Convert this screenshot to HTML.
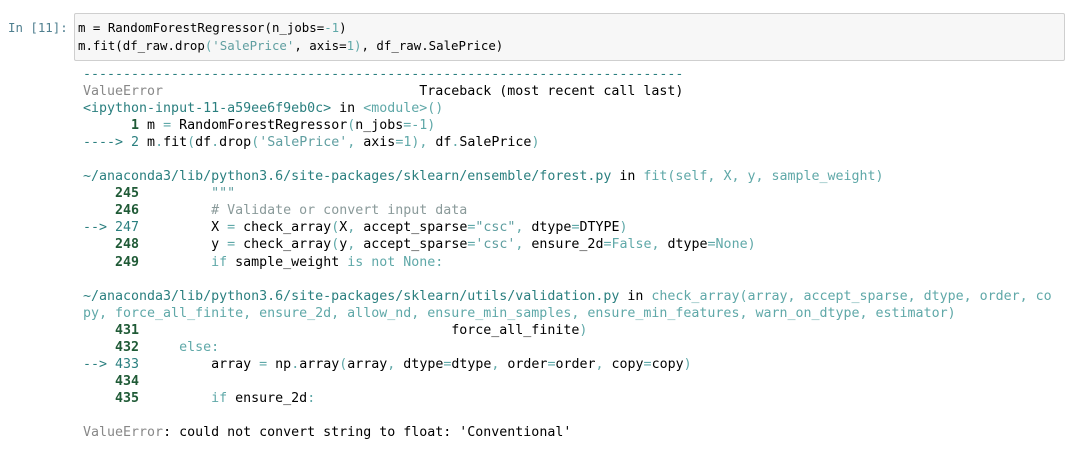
<!DOCTYPE html>
<html><head><meta charset="utf-8">
<style>
html,body{margin:0;padding:0;background:#fff;width:1076px;height:463px;overflow:hidden}
.prompt{position:absolute;left:8px;top:19px;font:12.4px/18px "DejaVu Sans Mono",monospace;color:#4f7f8f}
.inbox{position:absolute;left:74px;top:13px;width:989px;height:46px;background:#f7f7f7;border:1px solid #cfcfcf;border-radius:2px}
.in{position:absolute;left:78px;top:19px;margin:0;font:12.4px/18px "DejaVu Sans Mono",monospace;color:#000;white-space:pre}
.out{position:absolute;left:83px;top:66px;margin:0;font:13.3px/17.05px "DejaVu Sans Mono",monospace;color:#000;white-space:pre}
.s{color:#5f9ea0}
.n{color:#5fa8a8}
.o{color:#000}
.g{color:#888}
.t{color:#2a7f7f}
.c{color:#5fa8a8}
.b{color:#1f5a36;font-weight:bold}
.cm{color:#8a9a9a}
.st{color:#5f9ea0}
</style></head><body>
<div class="prompt">In [11]:</div>
<div class="inbox"></div>
<pre class="in">m <span class="o">=</span> RandomForestRegressor(n_jobs<span class="o">=</span><span class="n">-1</span>)
m.fit(df_raw.drop<span class="n">(</span><span class="s">'SalePrice'</span>, axis<span class="o">=</span><span class="n">1)</span>, df_raw.SalePrice)</pre>
<pre class="out"><span class="t">---------------------------------------------------------------------------</span>
<span class="g">ValueError</span>                                Traceback (most recent call last)
<span class="t">&lt;ipython-input-11-a59ee6f9eb0c&gt;</span> in <span class="c">&lt;module&gt;</span><span class="c">()</span>
<span class="b">      1</span> m <span class="c">=</span> RandomForestRegressor<span class="c">(</span>n_jobs<span class="c">=-1)</span>
<span class="t">----&gt; 2</span><span class="b"></span> m<span class="c">.</span>fit<span class="c">(</span>df<span class="c">.</span>drop<span class="c">(</span><span class="st">'SalePrice'</span><span class="c">,</span> axis<span class="c">=1),</span> df<span class="c">.</span>SalePrice<span class="c">)</span>

<span class="t">~/anaconda3/lib/python3.6/site-packages/sklearn/ensemble/forest.py</span> in <span class="c">fit(self, X, y, sample_weight)</span>
<span class="b">    245</span>         <span class="st">"""</span>
<span class="b">    246</span>         <span class="cm"># Validate or convert input data</span>
<span class="t">--&gt; 247</span>         X <span class="c">=</span> check_array<span class="c">(</span>X<span class="c">,</span> accept_sparse<span class="c">=</span><span class="st">"csc"</span><span class="c">,</span> dtype<span class="c">=</span>DTYPE<span class="c">)</span>
<span class="b">    248</span>         y <span class="c">=</span> check_array<span class="c">(</span>y<span class="c">,</span> accept_sparse<span class="c">=</span><span class="st">'csc'</span><span class="c">,</span> ensure_2d<span class="c">=False,</span> dtype<span class="c">=None)</span>
<span class="b">    249</span>         <span class="c">if</span> sample_weight <span class="c">is not None:</span>

<span class="t">~/anaconda3/lib/python3.6/site-packages/sklearn/utils/validation.py</span> in <span class="c">check_array(array, accept_sparse, dtype, order, co</span>
<span class="c">py, force_all_finite, ensure_2d, allow_nd, ensure_min_samples, ensure_min_features, warn_on_dtype, estimator)</span>
<span class="b">    431</span>                                       force_all_finite<span class="c">)</span>
<span class="b">    432</span>     <span class="c">else:</span>
<span class="t">--&gt; 433</span>         array <span class="c">=</span> np<span class="c">.</span>array<span class="c">(</span>array<span class="c">,</span> dtype<span class="c">=</span>dtype<span class="c">,</span> order<span class="c">=</span>order<span class="c">,</span> copy<span class="c">=</span>copy<span class="c">)</span>
<span class="b">    434</span>
<span class="b">    435</span>         <span class="c">if</span> ensure_2d<span class="c">:</span>

<span class="g">ValueError</span>: could not convert string to float: 'Conventional'</pre>
</body></html>
